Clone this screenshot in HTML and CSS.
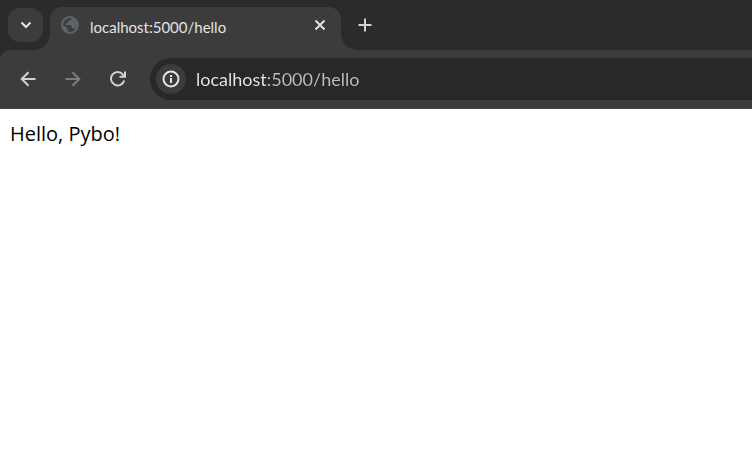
FILE: index.html
```html
<!DOCTYPE html>
<html lang="ko">
<head>
    <meta charset="UTF-8">
    <meta name="viewport" content="width=device-width, initial-scale=1.0">
    <title>localhost:5000/hello</title>
    <link rel="stylesheet" href="styles.css">
</head>
<body>
    <div class="tab-strip">
        <button class="tab-search" aria-label="Search tabs">
            <svg width="12" height="8" viewBox="0 0 12 8"><path d="M1.500 1.500 6 6l4.500-4.500"/></svg>
        </button>
        <div class="tab">
            <svg class="globe" width="18" height="18" viewBox="0 0 18 18">
                <circle cx="9" cy="9" r="8"/>
                <path d="M10.500 1.500v1.300c0 1-.7 1.700-1.700 1.700H7.200v1.700c0 .7-.5 1.100-1.200 1.100H4.500V9h4.300c1.200 0 1.900.8 1.900 1.900v1.400h1.200c.9 0 1.600.5 1.900 1.300 2-1.800 3.100-4.300 2.400-7.100-.6-2.400-2.500-4.300-5.800-5zM1.300 8.200c-.4 4 2.500 7.700 6.500 8.200v-1.700c-1 0-1.700-.7-1.700-1.700v-.9z"/>
            </svg>
            <span class="tab-title">localhost:5000/hello</span>
            <button class="tab-close" aria-label="Close tab">
                <svg width="12" height="12" viewBox="0 0 12 12"><path d="m1.500 1.500 9 9m0-9-9 9"/></svg>
            </button>
        </div>
        <button class="new-tab" aria-label="New tab">
            <svg width="14" height="14" viewBox="0 0 14 14"><path d="M7 .5v13M.5 7h13"/></svg>
        </button>
    </div>

    <div class="toolbar">
        <button class="nav" aria-label="Back">
            <svg width="16" height="16" viewBox="0 0 16 16"><path d="M15.500 8H2M8.500 1.200 1.700 8l6.800 6.800"/></svg>
        </button>
        <button class="nav" aria-label="Forward" disabled>
            <svg width="16" height="16" viewBox="0 0 16 16"><path d="M.5 8H14M7.500 1.200 14.300 8l-6.800 6.800"/></svg>
        </button>
        <button class="nav" aria-label="Reload">
            <svg width="16" height="16" viewBox="0 0 16 16"><path d="M14.200 9.500A6.700 6.700 0 1 1 13 3.600l2 2M15 .5v5.300H9.500"/></svg>
        </button>
        <div class="address">
            <button class="site-info" aria-label="View site information">
                <svg width="18" height="18" viewBox="0 0 18 18"><circle cx="9" cy="9" r="7.500"/><path d="M9 8v5M9 5v2"/></svg>
            </button>
            <input class="url" type="text" value="localhost:5000/hello" aria-label="Address" spellcheck="false">
        </div>
    </div>

    <main>Hello, Pybo!</main>
</body>
</html>
```

FILE: styles.css
```css
body {
    margin: 0;
    background-color: #fff;
    font-family: Lato, "Noto Sans CJK KR", sans-serif;
}

button {
    display: flex;
    align-items: center;
    justify-content: center;
    flex: none;
    padding: 0;
    border: none;
    background: none;
    color: #d2d2d2;
}

svg {
    display: block;
    fill: none;
    stroke: currentColor;
    stroke-width: 2;
}

/* Tabs */
.tab-strip {
    display: flex;
    height: 50px;
    background-color: #2b2b2b;
}

.tab-search {
    width: 35px;
    height: 34px;
    margin: 8px 7px 0 8px;
    border-radius: 12px;
    background-color: #3c3c3c;
    color: #e6e6e6;
}

.tab {
    position: relative;
    display: flex;
    align-items: center;
    box-sizing: border-box;
    width: 291px;
    height: 43px;
    margin-top: 7px;
    padding: 0 12px 7px 11px;
    border-radius: 12px 12px 0 0;
    background-color: #3c3c3c;
}

/* Curved feet that join the tab to the toolbar */
.tab::before,
.tab::after {
    content: "";
    position: absolute;
    bottom: 0;
    width: 15px;
    height: 15px;
}

.tab::before {
    right: 100%;
    background: radial-gradient(circle at 0 0, transparent 14px, #3c3c3c 15px);
}

.tab::after {
    left: 100%;
    background: radial-gradient(circle at 100% 0, transparent 14px, #3c3c3c 15px);
}

.globe {
    color: #5f6368;
}

.globe path {
    fill: currentColor;
    stroke: none;
}

.tab-title {
    flex: 1;
    margin: 4px 0 0 11px;
    color: #e3e3e3;
    font-size: 15px;
    line-height: 20px;
}

.tab-close {
    width: 18px;
    height: 18px;
    color: #e3e3e3;
}

.new-tab {
    width: 34px;
    height: 34px;
    margin: 8px 0 0 7px;
}

/* Toolbar */
.toolbar {
    display: flex;
    align-items: center;
    gap: 11px;
    height: 58px;
    padding-left: 11px;
    border-bottom: 1px solid #464646;
    background: radial-gradient(circle at 12px 12px, #3c3c3c 12px, #2b2b2b 13px) 0 0 / 12px 12px no-repeat, #3c3c3c;
}

.nav {
    width: 34px;
    height: 34px;
}

.nav:disabled {
    color: #7d7d7d;
}

.address {
    display: flex;
    align-items: center;
    flex: 1;
    height: 42px;
    margin-left: 4px;
    padding-left: 6px;
    border-radius: 21px 0 0 21px;
    background-color: #282828;
}

.site-info {
    width: 30px;
    height: 30px;
    border-radius: 50%;
    background-color: #3c3c3c;
    color: #e3e3e3;
}

/* The host is brighter than the rest of the address */
.url {
    flex: 1;
    min-width: 0;
    margin-left: 10px;
    padding: 0;
    border: none;
    outline: none;
    background: linear-gradient(to right, #e8e8e8 71px, #bdbdbd 71px);
    -webkit-background-clip: text;
    background-clip: text;
    color: transparent;
    caret-color: #e8e8e8;
    font-family: inherit;
    font-size: 18px;
    line-height: 26px;
}

main {
    padding: 12px 10px;
    color: #000;
    font-family: "Open Sans", "Noto Sans CJK KR", sans-serif;
    font-size: 20px;
    line-height: 26px;
}
```
